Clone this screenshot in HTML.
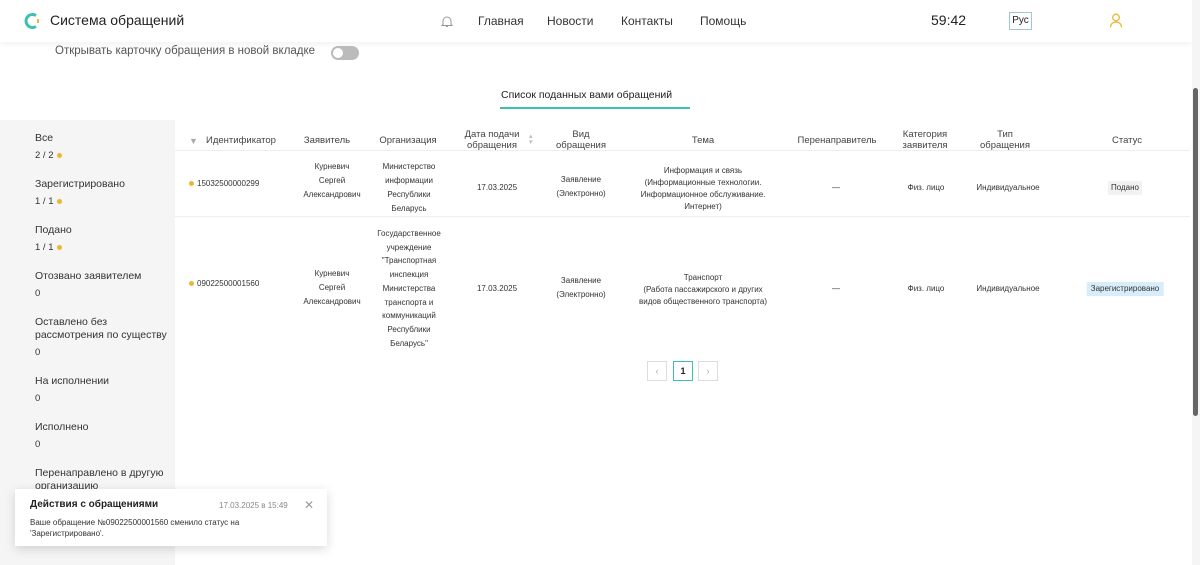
<!DOCTYPE html>
<html><head><meta charset="utf-8"><style>
*{margin:0;padding:0;box-sizing:border-box}
body{width:1200px;height:565px;overflow:hidden;background:#fff;font-family:"Liberation Sans",sans-serif;color:#222;position:relative}
.a{position:absolute}
.c{position:absolute;text-align:center;transform:translateX(-50%);font-size:8px;line-height:16px;color:#333;white-space:nowrap}
.h{position:absolute;text-align:center;transform:translateX(-50%);font-size:9.5px;line-height:11px;color:#444;white-space:nowrap}
.side div.t{font-size:10.5px;color:#333;line-height:13px;margin-top:16px}
.side div.t:first-child{margin-top:0}
.side div.n{font-size:9.5px;color:#333;margin-top:5px;line-height:12px}
.dot{display:inline-block;width:5px;height:5px;border-radius:50%;background:#e9b934;margin-left:3px;vertical-align:middle}
.pg{position:absolute;top:361px;width:20px;height:20px;border:1px solid #ddd;font-size:9px;text-align:center;line-height:18px;color:#aaa}
</style></head><body>
<div class="a" style="left:0;top:0;width:1192px;height:42px;background:#fff;box-shadow:0 2px 6px rgba(0,0,0,.06)"></div>
<svg class="a" style="left:24px;top:12px" width="18" height="18" viewBox="0 0 18 18"><path d="M12 3.5A6.5 6.5 0 1 0 12 14.5" fill="none" stroke="#3cc0b0" stroke-width="3"/><rect x="13" y="7" width="2" height="4" fill="#e9b934"/></svg>
<div class="a" style="left:50px;top:12px;font-size:14px;color:#222">Система обращений</div>
<svg class="a" style="left:441px;top:15px" width="12" height="13" viewBox="0 0 12 13"><path d="M2 9.5V6a4 4 0 0 1 8 0v3.5l1 1H1z M5 11.5h2" fill="none" stroke="#999" stroke-width="1"/></svg>
<div class="a" style="left:478px;top:14px;font-size:12px;color:#333">Главная</div>
<div class="a" style="left:547px;top:14px;font-size:12px;color:#333">Новости</div>
<div class="a" style="left:621px;top:14px;font-size:12px;color:#333">Контакты</div>
<div class="a" style="left:700px;top:14px;font-size:12px;color:#333">Помощь</div>
<div class="a" style="left:931px;top:12px;font-size:14px;color:#222">59:42</div>
<div class="a" style="left:1009px;top:12px;width:23px;height:18px;border:1px solid #9cc8d0;font-size:10px;line-height:16px;text-align:center">Рус</div>
<svg class="a" style="left:1109px;top:13px" width="14" height="15" viewBox="0 0 14 15"><circle cx="7" cy="4.5" r="3.3" fill="none" stroke="#e9b934" stroke-width="1.3"/><path d="M1.5 14.5c0-3.5 2.5-5.5 5.5-5.5s5.5 2 5.5 5.5" fill="none" stroke="#e9b934" stroke-width="1.3"/></svg>
<div class="a" style="left:55px;top:45px;font-size:11.5px;color:#555">Открывать карточку обращения в новой вкладке</div>
<div class="a" style="left:331px;top:46px;width:28px;height:14px;border-radius:7px;background:#bbb"><div class="a" style="left:2px;top:2px;width:10px;height:10px;border-radius:50%;background:#fff"></div></div>
<div class="a" style="left:501px;top:89px;font-size:10.5px;color:#222">Список поданных вами обращений</div>
<div class="a" style="left:500px;top:107px;width:190px;height:2px;background:#3cc0b0"></div>
<div class="a side" style="left:0;top:120px;width:175px;height:445px;background:#f5f5f5;padding:12px 0 0 35px">
<div class="t">Все</div><div class="n">2 / 2<span class="dot"></span></div>
<div class="t">Зарегистрировано</div><div class="n">1 / 1<span class="dot"></span></div>
<div class="t">Подано</div><div class="n">1 / 1<span class="dot"></span></div>
<div class="t">Отозвано заявителем</div><div class="n">0</div>
<div class="t">Оставлено без<br>рассмотрения по существу</div><div class="n">0</div>
<div class="t">На исполнении</div><div class="n">0</div>
<div class="t">Исполнено</div><div class="n">0</div>
<div class="t">Перенаправлено в другую<br>организацию</div>
</div>
<div class="a" style="left:189px;top:136px;font-size:9px;color:#aaa">▼</div>
<div class="h" style="left:241px;top:135px">Идентификатор</div>
<div class="h" style="left:327px;top:135px">Заявитель</div>
<div class="h" style="left:408px;top:135px">Организация</div>
<div class="h" style="left:492px;top:129px">Дата подачи<br>обращения</div>
<div class="a" style="left:529px;top:134px;font-size:7px;color:#bbb;line-height:6px">▴<br>▾</div>
<div class="h" style="left:581px;top:129px">Вид<br>обращения</div>
<div class="h" style="left:703px;top:135px">Тема</div>
<div class="h" style="left:837px;top:135px">Перенаправитель</div>
<div class="h" style="left:925px;top:129px">Категория<br>заявителя</div>
<div class="h" style="left:1005px;top:129px">Тип<br>обращения</div>
<div class="h" style="left:1127px;top:135px">Статус</div>
<div class="a" style="left:175px;top:150px;width:1015px;height:1px;background:#eee"></div>
<div class="a" style="left:175px;top:216px;width:1015px;height:1px;background:#eee"></div>
<div class="a" style="left:189px;top:176px;font-size:8px;line-height:16px;color:#333"><span class="dot" style="margin:0 3px 0 0"></span>15032500000299</div>
<div class="c" style="left:332px;top:160px;line-height:14px">Курневич<br>Сергей<br>Александрович</div>
<div class="c" style="left:409px;top:160px;line-height:14px">Министерство<br>информации<br>Республики<br>Беларусь</div>
<div class="c" style="left:497px;top:180px">17.03.2025</div>
<div class="c" style="left:581px;top:173px;line-height:14px">Заявление<br>(Электронно)</div>
<div class="c" style="left:703px;top:165px;line-height:12px">Информация и связь<br>(Информационные технологии.<br>Информационное обслуживание.<br>Интернет)</div>
<div class="c" style="left:836px;top:180px">—</div>
<div class="c" style="left:926px;top:180px">Физ. лицо</div>
<div class="c" style="left:1008px;top:180px">Индивидуальное</div>
<div class="c" style="left:1125px;top:181px;background:#f2f2f2;padding:0 3px;line-height:14px">Подано</div>
<div class="a" style="left:189px;top:276px;font-size:8px;line-height:16px;color:#333"><span class="dot" style="margin:0 3px 0 0"></span>09022500001560</div>
<div class="c" style="left:332px;top:267px;line-height:14px">Курневич<br>Сергей<br>Александрович</div>
<div class="c" style="left:409px;top:227px;line-height:13.7px">Государственное<br>учреждение<br>"Транспортная<br>инспекция<br>Министерства<br>транспорта и<br>коммуникаций<br>Республики<br>Беларусь"</div>
<div class="c" style="left:497px;top:281px">17.03.2025</div>
<div class="c" style="left:581px;top:274px;line-height:14px">Заявление<br>(Электронно)</div>
<div class="c" style="left:703px;top:272px;line-height:12px">Транспорт<br>(Работа пассажирского и других<br>видов общественного транспорта)</div>
<div class="c" style="left:836px;top:281px">—</div>
<div class="c" style="left:926px;top:281px">Физ. лицо</div>
<div class="c" style="left:1008px;top:281px">Индивидуальное</div>
<div class="c" style="left:1125px;top:282px;background:#d7eefa;padding:0 4px;line-height:14px">Зарегистрировано</div>
<div class="pg" style="left:647px">‹</div>
<div class="pg" style="left:673px;border-color:#3cc0b0;color:#222;font-weight:bold">1</div>
<div class="pg" style="left:698px">›</div>
<div class="a" style="left:1192px;top:0;width:8px;height:565px;background:#f5f5f5"></div>
<div class="a" style="left:1193px;top:88px;width:5px;height:328px;border-radius:3px;background:#666"></div>
<div class="a" style="left:15px;top:489px;width:312px;height:57px;background:#fff;box-shadow:0 3px 10px rgba(0,0,0,.15)">
<div class="a" style="left:15px;top:10px;font-size:10px;font-weight:bold;color:#222">Действия с обращениями</div>
<div class="a" style="left:204px;top:12px;font-size:8px;color:#888">17.03.2025 в 15:49</div>
<div class="a" style="left:289px;top:9px;font-size:12px;color:#999">✕</div>
<div class="a" style="left:15px;top:28px;font-size:8px;line-height:11px;color:#333">Ваше обращение №09022500001560 сменило статус на<br>'Зарегистрировано'.</div>
</div>
</body></html>
